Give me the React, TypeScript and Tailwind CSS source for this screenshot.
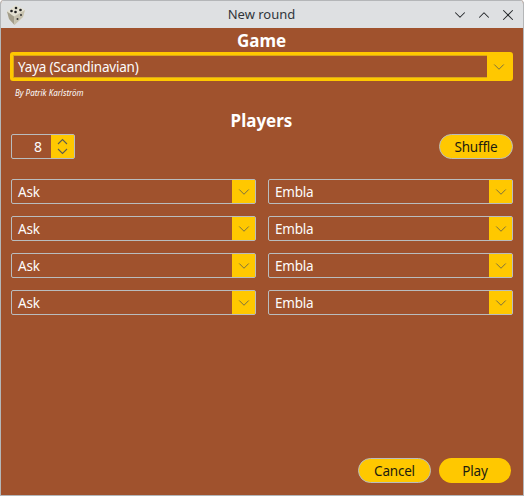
import { ChevronDown, ChevronUp, X } from "lucide-react";

const font = { fontFamily: '"Noto Sans", sans-serif' };

function Combo({ label }: { label: string }) {
  return (
    <div className="flex h-[25px] min-w-0 flex-1 rounded-[2px] border border-[#b9bcbe]">
      <span className="flex-1 pl-[6px] text-[13.5px] leading-[24px] tracking-[-0.2px] text-[#fcfcfc]">{label}</span>
      <span className="flex w-[23px] items-center justify-center bg-[#ffc800]">
        <ChevronDown className="h-[18px] w-[18px] text-[#5f5e4c]" strokeWidth={1.1} />
      </span>
    </div>
  );
}

function Dice() {
  return (
    <svg width="20" height="22" viewBox="0 0 20 22">
      <path d="M1 7.5 L9.5 1 L19 6 L17 13 L8.5 21 L3 15 Z" fill="#e4e1d2" />
      <path d="M1 7.5 L8 12.5 L8.5 21 L3 15 Z" fill="#a39d8a" />
      <path d="M8 12.5 L19 6 L17 13 L8.5 21 Z" fill="#c6c1ae" />
      <circle cx="5.5" cy="7" r="1.3" fill="#222" />
      <circle cx="10" cy="4" r="1.3" fill="#222" />
      <circle cx="9.5" cy="8" r="1.3" fill="#222" />
      <circle cx="14.5" cy="6" r="1.3" fill="#222" />
      <circle cx="11.5" cy="15" r="1" fill="#333" />
      <circle cx="15" cy="11" r="1" fill="#333" />
    </svg>
  );
}

export default function App() {
  return (
    <div style={font} className="flex h-[496px] w-[524px] flex-col overflow-hidden rounded-t-[4px] border border-t-0 border-[#b4b6b8] bg-[#a0522d]">
      <div className="grid h-[28px] shrink-0 grid-cols-[1fr_auto_1fr] items-center border-t border-[#b4b6b8] bg-[#dee0e2] pl-[5px] pr-[6px]">
        <Dice />
        <span className="text-[13px] text-[#31363b]">New round</span>
        <div className="flex items-center justify-end gap-[6px] text-[#232629]">
          <ChevronDown className="h-[18px] w-[18px]" strokeWidth={1.4} />
          <ChevronUp className="h-[18px] w-[18px]" strokeWidth={1.4} />
          <X className="h-[18px] w-[18px]" strokeWidth={1.4} />
        </div>
      </div>

      <div className="flex flex-1 flex-col pl-[9px] pr-[10px]">
        <h1 className="mt-[2px] text-center text-[17px] font-bold leading-[22px] text-white">Game</h1>
        <div className="flex h-[29px] rounded-[3px] border-[3px] border-[#ffc800] ring-1 ring-inset ring-[#d9a81a]">
          <span className="flex-1 pl-[5px] text-[13.5px] leading-[24px] tracking-[-0.2px] text-[#fcfcfc]">Yaya (Scandinavian)</span>
          <span className="flex w-[23px] items-center justify-center bg-[#ffc800]">
            <ChevronDown className="h-[18px] w-[18px] text-[#5f5e4c]" strokeWidth={1.1} />
          </span>
        </div>
        <p className="mt-[5px] pl-[5px] text-[8px] italic leading-[14px] text-[#fcfcfc]">By Patrik Karlström</p>

        <h2 className="mt-[8px] text-center text-[17px] font-bold leading-[25px] text-white">Players</h2>

        <div className="mt-[1px] flex items-center justify-between pl-[1px]">
          <div className="flex h-[25px] w-[64px] rounded-[2px] border border-[#b9bcbe]">
            <span className="flex-1 pr-[9px] text-right text-[14px] leading-[23px] text-[#fcfcfc]">8</span>
            <span className="flex w-[23px] items-center justify-center bg-[#ffc800]">
              <svg width="11" height="17" viewBox="0 0 11 17" fill="none" stroke="#5f5e4c" strokeWidth="1.1">
                <path d="M1 6 L5.5 1.5 L10 6" />
                <path d="M1 11 L5.5 15.5 L10 11" />
              </svg>
            </span>
          </div>
          <button className="h-[25px] w-[74px] rounded-full border border-[#b9bcbe] bg-[#ffc800] pt-px text-[13.5px] tracking-[-0.2px] text-[#1c1c10]">Shuffle</button>
        </div>

        <div className="mt-[20px] grid grid-cols-2 gap-x-[12px] gap-y-[12px] pl-[1px]">
          {[0, 1, 2, 3].map((i) => (
            <div key={i} className="contents">
              <Combo label="Ask" />
              <Combo label="Embla" />
            </div>
          ))}
        </div>

        <div className="mt-auto mb-[12px] flex justify-end gap-[8px] pr-[2px]">
          <button className="h-[25px] w-[73px] rounded-full border border-[#b9bcbe] bg-[#ffc800] pt-px text-[13.5px] tracking-[-0.2px] text-[#1c1c10]">Cancel</button>
          <button className="h-[25px] w-[72px] rounded-full bg-[#ffc800] pt-px text-[13.5px] tracking-[-0.2px] text-[#1c1c10]">Play</button>
        </div>
      </div>
    </div>
  );
}
